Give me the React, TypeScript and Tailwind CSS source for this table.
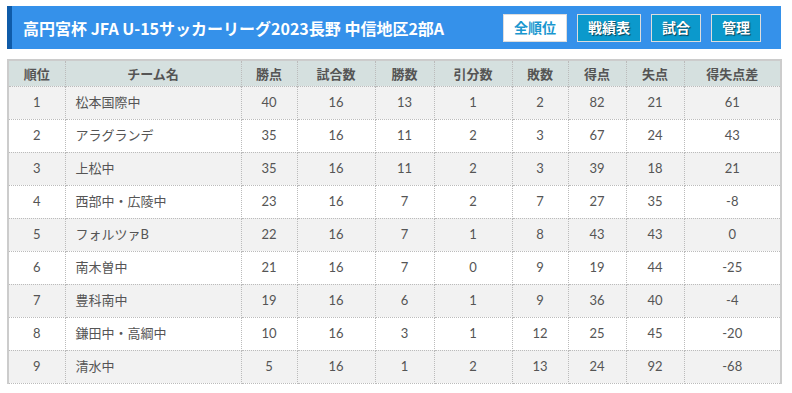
const ROWS: [number, string, number, number, number, number, number, number, number, number][] = [
  [1, "松本国際中", 40, 16, 13, 1, 2, 82, 21, 61],
  [2, "アラグランデ", 35, 16, 11, 2, 3, 67, 24, 43],
  [3, "上松中", 35, 16, 11, 2, 3, 39, 18, 21],
  [4, "西部中・広陵中", 23, 16, 7, 2, 7, 27, 35, -8],
  [5, "フォルツァB", 22, 16, 7, 1, 8, 43, 43, 0],
  [6, "南木曽中", 21, 16, 7, 0, 9, 19, 44, -25],
  [7, "豊科南中", 19, 16, 6, 1, 9, 36, 40, -4],
  [8, "鎌田中・高綱中", 10, 16, 3, 1, 12, 25, 45, -20],
  [9, "清水中", 5, 16, 1, 2, 13, 24, 92, -68],
];

const COLS = [
  { label: "順位", w: "w-[57px]" },
  { label: "チーム名", w: "w-[176px]" },
  { label: "勝点", w: "w-[56px]" },
  { label: "試合数", w: "w-[78px]" },
  { label: "勝数", w: "w-[59px]" },
  { label: "引分数", w: "w-[78px]" },
  { label: "敗数", w: "w-[56px]" },
  { label: "得点", w: "w-[58px]" },
  { label: "失点", w: "w-[58px]" },
  { label: "得失点差", w: "w-[97px]" },
];

const FONT = "font-['Lato','Noto_Sans_CJK_JP',sans-serif]";

function NavButton({ label, width, active }: { label: string; width: string; active?: boolean }) {
  return (
    <button
      className={
        active
          ? `${width} h-[28px] border border-[#dddddd] bg-white text-[14px] font-bold text-[#1a97cf]`
          : `${width} h-[28px] border border-[#dddddd] bg-[#0b99cc] text-[14px] font-bold text-white [text-shadow:1px_1px_1px_rgba(0,0,0,0.6)]`
      }
    >
      {label}
    </button>
  );
}

export default function App() {
  return (
    <div className={`min-h-screen bg-white px-[7px] pt-[6px] text-[#555] ${FONT}`}>
      {/* Title bar */}
      <div className="flex h-[43px] w-[774px] items-center justify-between border-l-[5px] border-[#0f5ba8] bg-[#3591ea] pl-[11px] pr-[20px]">
        <h1 className="text-[16px] font-bold text-white font-['Noto_Sans_CJK_JP',sans-serif]">
          高円宮杯 JFA U-15サッカーリーグ2023長野 中信地区2部A
        </h1>
        <div className="flex gap-[10px] font-['Noto_Sans_CJK_JP',sans-serif]">
          <NavButton label="全順位" width="w-[64px]" active />
          <NavButton label="戦績表" width="w-[64px]" />
          <NavButton label="試合" width="w-[50px]" />
          <NavButton label="管理" width="w-[50px]" />
        </div>
      </div>

      {/* Standings */}
      <table className="mt-[10px] w-[773px] table-fixed border-collapse border-x-2 border-t-2 border-x-[#cccccc] border-t-[#cccccc] text-[13px]">
        <thead>
          <tr className="h-[26px] bg-[#d5e0df]">
            {COLS.map((c) => (
              <th
                key={c.label}
                className={`${c.w} border-x border-dotted border-[#bbbbbb] p-0 text-center text-[13px] font-bold font-['Noto_Sans_CJK_JP',sans-serif]`}
              >
                {c.label}
              </th>
            ))}
          </tr>
        </thead>
        <tbody>
          {ROWS.map((r, i) => (
            <tr key={r[0]} className={i % 2 === 0 ? "h-[33px] bg-[#f2f2f2]" : "h-[33px] bg-white"}>
              {r.map((v, j) => (
                <td
                  key={j}
                  className={`border border-dotted border-[#bbbbbb] p-0 ${j === 1 ? "pl-[10px] text-left" : "text-center"}`}
                >
                  {v}
                </td>
              ))}
            </tr>
          ))}
        </tbody>
      </table>
    </div>
  );
}
